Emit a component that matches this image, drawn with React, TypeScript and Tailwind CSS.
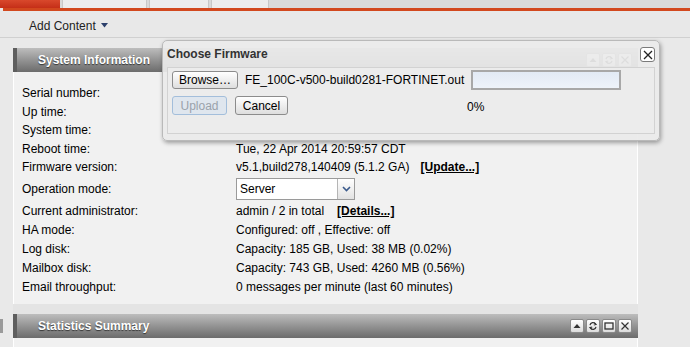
import React from 'react';

function IconBox({ kind, faint = false }: { kind: 'up' | 'refresh' | 'max' | 'close'; faint?: boolean }) {
  return (
    <div
      className={`w-[14px] h-[14px] rounded-[2px] border flex items-center justify-center ${
        faint ? 'border-[#d6d6d6] bg-[#f2f2f2]' : 'border-[#8a8a8a] bg-gradient-to-b from-white to-[#dcdcdc]'
      }`}
    >
      <svg width="10" height="10" viewBox="0 0 10 10" fill="none" stroke={faint ? '#cfcfcf' : '#333'} strokeWidth="1.2">
        {kind === 'up' && <path d="M1.5 7 L5 3 L8.5 7 Z" fill={faint ? '#cfcfcf' : '#333'} stroke="none" />}
        {kind === 'refresh' && (
          <>
            <path d="M2 4.2 A3 3 0 0 1 7.6 3.2" />
            <path d="M6.2 1.6 L8 3.4 L5.8 4" />
            <path d="M8 5.8 A3 3 0 0 1 2.4 6.8" />
            <path d="M3.8 8.4 L2 6.6 L4.2 6" />
          </>
        )}
        {kind === 'max' && <rect x="1" y="2" width="8" height="6" strokeWidth="1.3" />}
        {kind === 'close' && <path d="M1.5 1.5 L8.5 8.5 M8.5 1.5 L1.5 8.5" />}
      </svg>
    </div>
  );
}

function PanelHeader({ title, icons }: { title: string; icons: ('up' | 'refresh' | 'max' | 'close')[] }) {
  return (
    <div className="h-[24px] flex items-center pl-[21px] pr-[6px] bg-gradient-to-b from-[#bdbdbd] to-[#6c6c6c] border-l-[4px] border-[#5e5e5e]">
      <span className="flex-1 text-white font-bold text-[12px] [text-shadow:0_1px_1px_rgba(0,0,0,0.6)]">{title}</span>
      <div className="flex gap-[2px]">
        {icons.map((k, i) => (
          <IconBox key={i} kind={k} />
        ))}
      </div>
    </div>
  );
}

type Row = { label: string; value?: React.ReactNode; h: string };

export default function App() {
  const rows: Row[] = [
    { label: 'Serial number:', h: 'h-[18.5px]' },
    { label: 'Up time:', h: 'h-[18.5px]' },
    { label: 'System time:', h: 'h-[18.5px]' },
    { label: 'Reboot time:', value: 'Tue, 22 Apr 2014 20:59:57 CDT', h: 'h-[18.5px]' },
    {
      label: 'Firmware version:',
      value: (
        <>
          v5.1,build278,140409 (5.1.2 GA)
          <span className="ml-[11px] font-bold underline">[Update...]</span>
        </>
      ),
      h: 'h-[18.5px]',
    },
    {
      label: 'Operation mode:',
      value: (
        <div className="w-[119px] h-[22px] flex bg-white border border-[#9a9a9a]">
          <span className="flex-1 pl-[3px] flex items-center">Server</span>
          <div className="w-[17px] border-l border-[#b5b5b5] bg-gradient-to-b from-white to-[#e2e2e2] flex items-center justify-center">
            <svg width="9" height="6" viewBox="0 0 9 6">
              <path d="M1 1 L4.5 4.5 L8 1" fill="none" stroke="#3a5a8c" strokeWidth="1.6" />
            </svg>
          </div>
        </div>
      ),
      h: 'h-[25px]',
    },
    {
      label: 'Current administrator:',
      value: (
        <>
          admin / 2 in total
          <span className="ml-[13px] font-bold underline">[Details...]</span>
        </>
      ),
      h: 'h-[19px]',
    },
    { label: 'HA mode:', value: 'Configured: off , Effective: off', h: 'h-[19px]' },
    { label: 'Log disk:', value: 'Capacity: 185 GB, Used: 38 MB (0.02%)', h: 'h-[19px]' },
    { label: 'Mailbox disk:', value: 'Capacity: 743 GB, Used: 4260 MB (0.56%)', h: 'h-[19px]' },
    { label: 'Email throughput:', value: '0 messages per minute (last 60 minutes)', h: 'h-[19px]' },
  ];

  return (
    <div className="relative w-[690px] h-[347px] overflow-hidden bg-[#e9e9e9] text-[12px] text-black font-['Liberation_Sans',Arial,sans-serif]">
      {/* Tabs */}
      <div className="flex h-[8px] bg-[#dadada]">
        <div className="w-[60px] bg-gradient-to-b from-[#d9482c] to-[#c52e17]" />
        <div className="ml-[2px] w-[85px] bg-[#ededed] border-x border-[#c8c8c8]" />
        <div className="ml-[2px] w-[60px] bg-[#ededed] border-x border-[#c8c8c8]" />
        <div className="ml-[2px] w-[58px] bg-[#ededed] border-x border-[#c8c8c8]" />
      </div>
      <div className="ml-[3px] h-[3px] bg-[#d2481e]" />

      {/* Toolbar */}
      <div className="h-[27px] flex items-center pl-[29px] pt-[3px] bg-[#e8e8e8] border-b border-[#d0d0d0] text-[#222]">
        Add Content
        <svg className="ml-[5px]" width="7" height="5" viewBox="0 0 7 5">
          <path d="M0 0 L7 0 L3.5 4.5 Z" fill="#2b3f6b" />
        </svg>
      </div>

      {/* Content */}
      <div className="pl-[13px] pt-[10px] w-[638px]">
        <PanelHeader title="System Information" icons={['up', 'refresh', 'close']} />
        <div className="bg-[#f1f1f1] border-l border-r border-white pl-[8px] pt-[12px] h-[232px]">
          {rows.map((r, i) => (
            <div key={i} className={`flex items-center ${r.h}`}>
              <div className="w-[214px] shrink-0">{r.label}</div>
              <div className="flex items-center">{r.value}</div>
            </div>
          ))}
        </div>
        <div className="h-[10px] bg-[#e4e4e4]" />
        <PanelHeader title="Statistics Summary" icons={['up', 'refresh', 'max', 'close']} />
        <div className="bg-[#f1f1f1] border-l border-r border-white h-[20px]" />
      </div>
      <div className="absolute left-0 top-[319px] w-[3px] h-[14px] bg-[#9a9a9a]" />

      {/* Dialog */}
      <div className="absolute left-[162px] top-[40px] w-[498px] h-[101px] rounded-[5px] border border-[#b9b9b9] bg-[#ebebeb]/[0.93] shadow-[1px_2px_4px_rgba(0,0,0,0.35)] px-[4px] pt-[6px]">
        <div className="flex items-start h-[20px]">
          <span className="flex-1 font-bold text-[#333] leading-[14px]">Choose Firmware</span>
          <div className="w-[15px] h-[15px] rounded-[3px] border border-[#7a7a7a] bg-white flex items-center justify-center">
            <svg width="10" height="10" viewBox="0 0 10 10">
              <path d="M1 1 L9 9 M9 1 L1 9" stroke="#222" strokeWidth="1.3" />
            </svg>
          </div>
        </div>
        <div className="h-[67px] border border-[#d2d2d2] bg-[#ececec] px-[4px] pt-[2px]">
          <div className="flex items-center h-[20px]">
            <button className="w-[66px] h-[18px] rounded-[3px] border border-[#8c8c8c] bg-gradient-to-b from-white to-[#dedede] text-[12px] leading-none">
              Browse…
            </button>
            <span className="ml-[7px]">FE_100C-v500-build0281-FORTINET.out</span>
            <div className="ml-[7px] w-[150px] h-[20px] border-2 border-[#a8a8a8] bg-gradient-to-b from-[#e2eaf5] to-[#eef3fa]" />
          </div>
          <div className="flex items-center h-[19px] mt-[6px]">
            <button className="w-[55px] h-[19px] rounded-[3px] border border-[#a3bedb] bg-[#dfe6ee] text-[#9aa2ab] text-[12px] leading-none">
              Upload
            </button>
            <button className="ml-[8px] w-[53px] h-[19px] rounded-[3px] border border-[#8c8c8c] bg-gradient-to-b from-white to-[#dedede] text-[12px] leading-none">
              Cancel
            </button>
            <span className="ml-[179px] mt-[2px]">0%</span>
          </div>
        </div>
      </div>
    </div>
  );
}
